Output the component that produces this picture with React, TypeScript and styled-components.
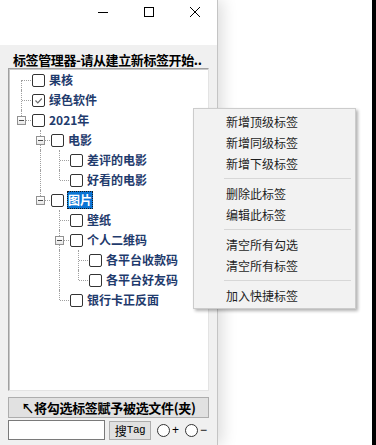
import React from 'react'
import styled, { createGlobalStyle, css } from 'styled-components'

const cjk = `"Noto Sans CJK SC", "Noto Sans", sans-serif`

type TagNode = { label: string; checked?: boolean; selected?: boolean; children?: TagNode[] }
type Guide = 'blank' | 'pipe' | 'tee' | 'last' | 'first'
type Row = { node: TagNode; guides: Guide[] }

const tree: TagNode[] = [
  { label: '果核' },
  { label: '绿色软件', checked: true },
  {
    label: '2021年',
    children: [
      { label: '电影', children: [{ label: '差评的电影' }, { label: '好看的电影' }] },
      {
        label: '图片',
        selected: true,
        children: [
          { label: '壁纸' },
          { label: '个人二维码', children: [{ label: '各平台收款码' }, { label: '各平台好友码' }] },
          { label: '银行卡正反面' },
        ],
      },
    ],
  },
]

const menu = [
  ['新增顶级标签', '新增同级标签', '新增下级标签'],
  ['删除此标签', '编辑此标签'],
  ['清空所有勾选', '清空所有标签'],
  ['加入快捷标签'],
]

// walk the tree and work out which dotted guide each indent cell gets
const flatten = (nodes: TagNode[], trail: boolean[], out: Row[]): Row[] => {
  nodes.forEach((node, i) => {
    const isLast = i === nodes.length - 1
    const own: Guide = trail.length === 0 && i === 0 && !isLast ? 'first' : isLast ? 'last' : 'tee'
    const guides: Guide[] = [...trail.map(more => (more ? 'pipe' : 'blank') as Guide), own]
    out.push({ node, guides })
    if (node.children) flatten(node.children, [...trail, !isLast], out)
  })
  return out
}

const rows = flatten(tree, [], [])

const GlobalStyle = createGlobalStyle`
  html, body {
    margin: 0;
    padding: 0;
    background: #ffffff;
  }
  body {
    font-family: ${cjk};
  }
`

export default function App() {
  return (
    <>
      <GlobalStyle />
      <Screen>
        <Window>
          <TitleBar>
            <CaptionButton>
              <svg width="10" height="10" viewBox="0 0 10 10">
                <line x1="0" y1="5.5" x2="10" y2="5.5" stroke="#000" strokeWidth="1" />
              </svg>
            </CaptionButton>
            <CaptionButton>
              <svg width="10" height="10" viewBox="0 0 10 10">
                <rect x="0.5" y="0.5" width="9" height="9" fill="none" stroke="#000" strokeWidth="1" />
              </svg>
            </CaptionButton>
            <CaptionButton>
              <svg width="10" height="10" viewBox="0 0 10 10">
                <path d="M0 0 L10 10 M10 0 L0 10" stroke="#000" strokeWidth="1" />
              </svg>
            </CaptionButton>
          </TitleBar>

          <Panel>
            <Heading>标签管理器-请从建立新标签开始..</Heading>

            <TreeBox>
              {rows.map(({ node, guides }) => (
                <TreeRow key={node.label}>
                  {guides.map((g, i) => (
                    <GuideCell key={i} $kind={g}>
                      {i === guides.length - 1 && node.children && <Expander />}
                    </GuideCell>
                  ))}
                  <CheckBox>
                    {node.checked && (
                      <svg width="9" height="9" viewBox="0 0 9 9">
                        <polyline points="1.5,4.5 3.8,6.8 7.8,2.5" fill="none" stroke="#6b6b6b" strokeWidth="1.2" />
                      </svg>
                    )}
                  </CheckBox>
                  <Label $selected={!!node.selected}>{node.label}</Label>
                </TreeRow>
              ))}
            </TreeBox>

            <AssignButton>↖将勾选标签赋予被选文件(夹)</AssignButton>

            <SearchRow>
              <SearchInput />
              <SearchButton>
                搜<Latin>Tag</Latin>
              </SearchButton>
              <Radio />
              <Sign>+</Sign>
              <Radio />
              <Sign>−</Sign>
            </SearchRow>
          </Panel>
        </Window>

        <Spacer />
        <EdgeBar />

        <ContextMenu>
          {menu.map((group, gi) => (
            <React.Fragment key={gi}>
              {gi > 0 && <MenuSeparator />}
              {group.map(item => (
                <MenuItem key={item}>{item}</MenuItem>
              ))}
            </React.Fragment>
          ))}
        </ContextMenu>
      </Screen>
    </>
  )
}

const Screen = styled.div`
  position: relative;
  display: flex;
  width: 376px;
  height: 445px;
  overflow: hidden;
`

const Window = styled.div`
  display: flex;
  flex-direction: column;
  width: 218px;
  height: 100%;
  box-sizing: border-box;
  border-right: 1px solid #c4c4c4;
  box-shadow: 5px 0 14px rgba(0, 0, 0, 0.13);
  position: relative;
  z-index: 1;
`

const TitleBar = styled.div`
  display: flex;
  justify-content: flex-end;
  align-items: flex-start;
  height: 45px;
  background: #ffffff;
`

const CaptionButton = styled.div`
  display: flex;
  align-items: center;
  justify-content: center;
  width: 46px;
  height: 24px;

  &:last-child {
    width: 45px;
  }
`

const Panel = styled.div`
  flex: 1;
  display: flex;
  flex-direction: column;
  padding: 0 8px;
  background: #f0f0f0;
`

const Heading = styled.div`
  margin: 7px 0 0 5px;
  height: 16px;
  line-height: 16px;
  font-size: 13px;
  font-weight: 700;
  letter-spacing: -0.4px;
  color: #000;
  white-space: nowrap;
`

const TreeBox = styled.div`
  height: 323px;
  box-sizing: border-box;
  padding: 1px 0 0 3px;
  background: #ffffff;
  border-top: 1px solid #a0a0a0;
  border-left: 1px solid #a0a0a0;
  border-right: 1px solid #e3e3e3;
  border-bottom: 1px solid #e3e3e3;
  box-shadow: inset 1px 1px 0 #c8c8c8;
`

const TreeRow = styled.div`
  display: flex;
  align-items: center;
  height: 20px;
`

const dotted = '1px dotted #a0a0a0'

const GuideCell = styled.span<{ $kind: Guide }>`
  position: relative;
  flex: none;
  width: 19px;
  height: 20px;

  &::before {
    content: '';
    position: absolute;
    left: 9px;
    border-left: ${dotted};
    ${({ $kind }) =>
      $kind === 'blank'
        ? css`display: none;`
        : $kind === 'last'
        ? css`top: 0; height: 10px;`
        : $kind === 'first'
        ? css`top: 10px; bottom: 0;`
        : css`top: 0; bottom: 0;`}
  }

  &::after {
    content: '';
    position: absolute;
    top: 10px;
    left: 10px;
    width: 9px;
    border-top: ${dotted};
    display: ${({ $kind }) => ($kind === 'blank' || $kind === 'pipe' ? 'none' : 'block')};
  }
`

const Expander = styled.span`
  position: absolute;
  z-index: 1;
  left: 5px;
  top: 6px;
  width: 9px;
  height: 9px;
  box-sizing: border-box;
  border: 1px solid #919191;
  background: linear-gradient(#ffffff, #e6e6e6);

  &::after {
    content: '';
    position: absolute;
    left: 1px;
    top: 3px;
    width: 5px;
    height: 1px;
    background: #4a4a4a;
  }
`

const CheckBox = styled.span`
  flex: none;
  display: flex;
  align-items: center;
  justify-content: center;
  width: 13px;
  height: 13px;
  box-sizing: border-box;
  margin-left: 1px;
  border: 1px solid #333333;
  border-radius: 2px;
  background: #ffffff;
`

const Label = styled.span<{ $selected: boolean }>`
  margin-left: 3px;
  padding: 0 1px;
  height: 18px;
  line-height: 18px;
  box-sizing: border-box;
  font-size: 12px;
  font-weight: 700;
  white-space: nowrap;
  color: ${({ $selected }) => ($selected ? '#ffffff' : '#1f3b6d')};
  background: ${({ $selected }) => ($selected ? '#0a74d4' : 'transparent')};
  outline: ${({ $selected }) => ($selected ? '1px dotted #1a1a1a' : 'none')};
  outline-offset: -1px;
`

const AssignButton = styled.div`
  margin-top: 6px;
  height: 21px;
  box-sizing: border-box;
  display: flex;
  align-items: center;
  justify-content: center;
  background: #e1e1e1;
  border: 1px solid #adadad;
  font-size: 13px;
  font-weight: 700;
  letter-spacing: -0.3px;
  color: #000;
  white-space: nowrap;
`

const SearchRow = styled.div`
  display: flex;
  align-items: center;
  margin-top: 2px;
  height: 20px;
`

const SearchInput = styled.div`
  width: 97px;
  height: 20px;
  box-sizing: border-box;
  background: #ffffff;
  border: 1px solid #7a7a7a;
`

const SearchButton = styled.div`
  margin-left: 4px;
  width: 42px;
  height: 19px;
  box-sizing: border-box;
  display: flex;
  align-items: center;
  justify-content: center;
  background: #e1e1e1;
  border: 1px solid #adadad;
  font-size: 12px;
  color: #000;
`

const Latin = styled.span`
  font-family: "Liberation Mono", monospace;
  font-size: 11px;
  letter-spacing: -0.5px;
`

const Radio = styled.span`
  margin-left: 6px;
  width: 13px;
  height: 13px;
  box-sizing: border-box;
  border: 1px solid #333333;
  border-radius: 50%;
  background: #ffffff;
`

const Sign = styled.span`
  margin-left: 2px;
  font-family: "Liberation Sans", sans-serif;
  font-size: 12px;
  color: #000;
`

const Spacer = styled.div`
  flex: 1;
`

const EdgeBar = styled.div`
  width: 4px;
  background: #000;
`

const ContextMenu = styled.div`
  position: absolute;
  z-index: 2;
  left: 193px;
  top: 108px;
  width: 163px;
  box-sizing: border-box;
  padding: 2px 0;
  background: #f2f2f2;
  border: 1px solid #cccccc;
  box-shadow: 2px 2px 3px rgba(0, 0, 0, 0.3);
`

const MenuItem = styled.div`
  height: 21px;
  line-height: 21px;
  padding-left: 32px;
  font-size: 12px;
  color: #1e1e1e;
  white-space: nowrap;
`

const MenuSeparator = styled.div`
  height: 1px;
  margin: 4px 4px 4px 30px;
  background: #d7d7d7;
`
